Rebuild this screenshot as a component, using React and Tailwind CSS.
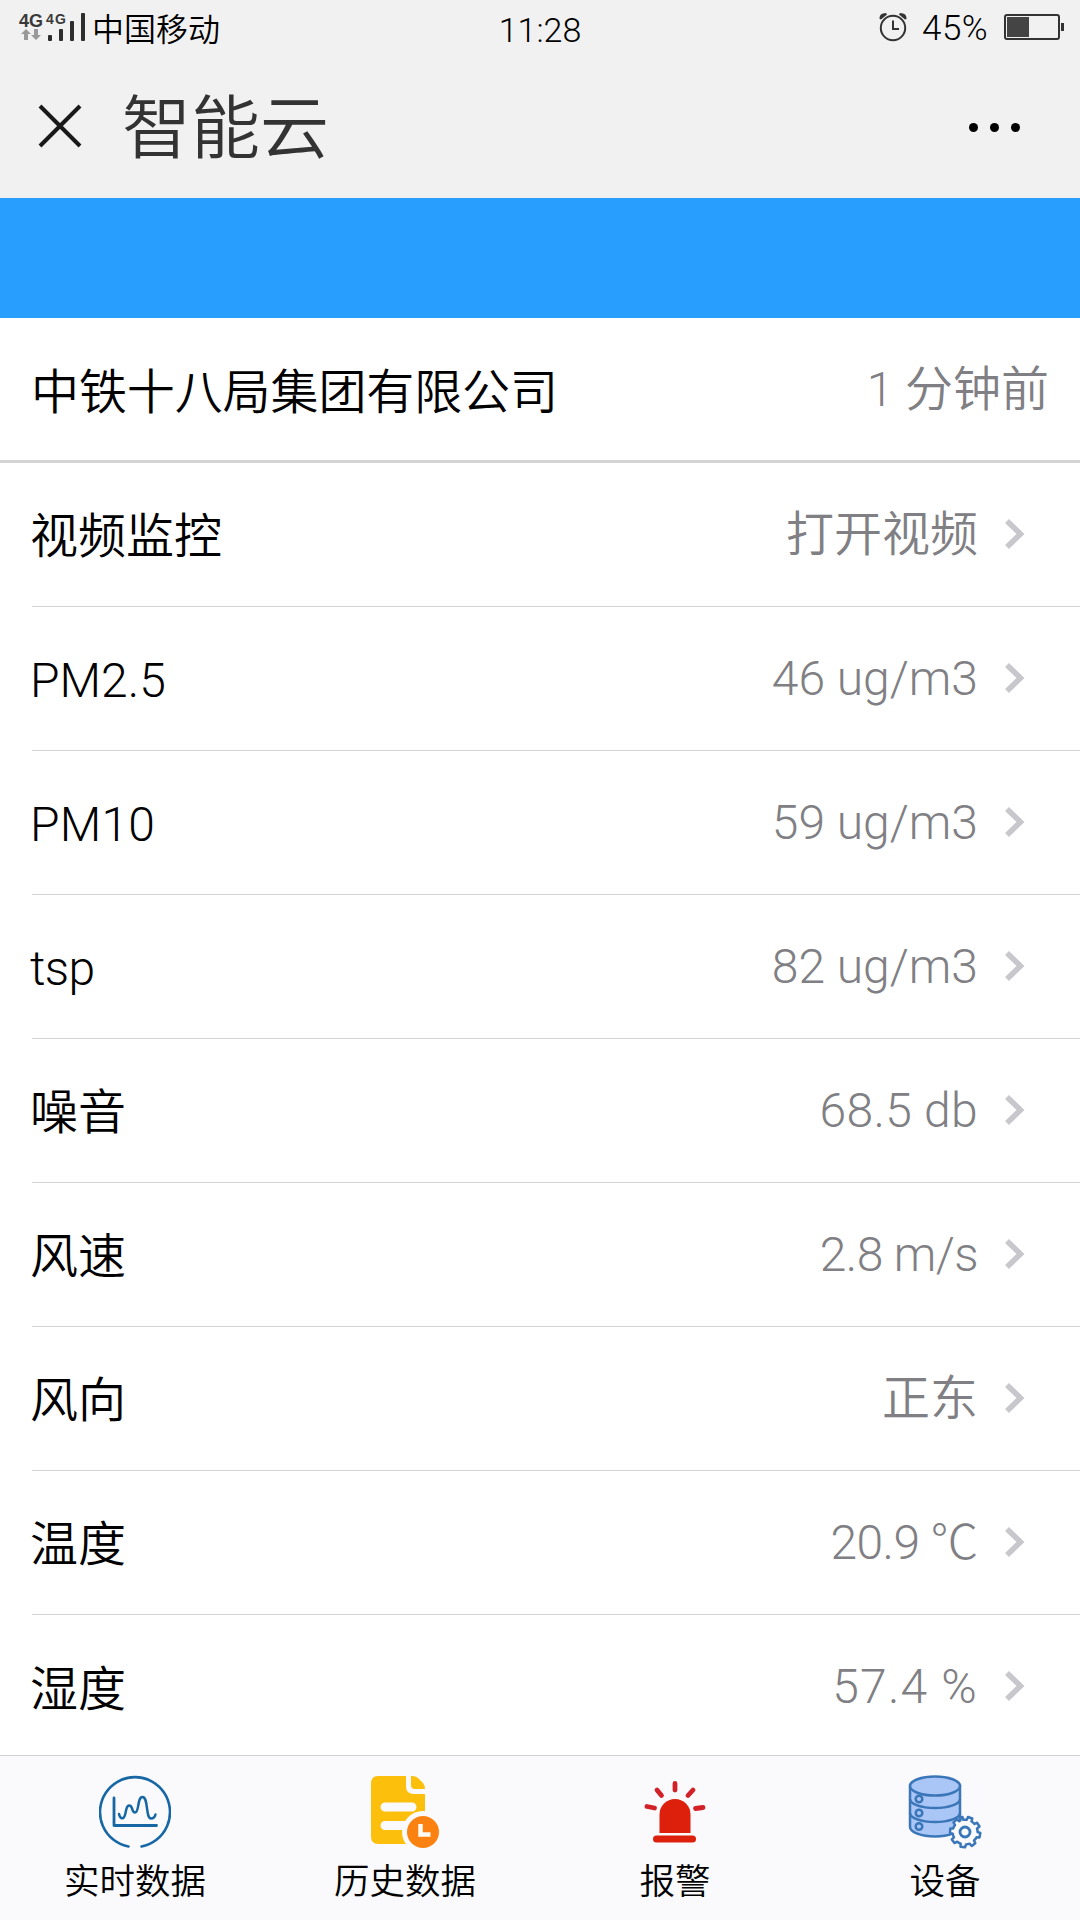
import React from "react";

const readings = [
  { label: "视频监控", value: "打开视频" },
  { label: "PM2.5", value: "46 ug/m3", labelClass: "font-light", valueClass: "font-light" },
  { label: "PM10", value: "59 ug/m3", labelClass: "font-light tracking-[0.2px]", valueClass: "font-light" },
  { label: "tsp", value: "82 ug/m3", labelClass: "font-light tracking-[-0.6px]", valueClass: "font-light" },
  { label: "噪音", value: "68.5 db", valueClass: "font-light tracking-[0.3px]" },
  { label: "风速", value: "2.8 m/s", valueClass: "font-light tracking-[-0.6px]" },
  { label: "风向", value: "正东" },
  { label: "温度", value: "20.9 ℃", valueClass: "font-light tracking-[-0.6px]" },
  { label: "湿度", value: "57.4 %", valueClass: "font-light tracking-[1.2px]" },
];

function RealtimeIcon() {
  return (
    <svg width="72" height="74" viewBox="0 0 72 74" fill="none" stroke="#1767a5" strokeLinecap="round" strokeLinejoin="round">
      <path d="M29.5 71.5A35 35 0 1 1 42.5 71.5" strokeWidth="2.6" />
      <path d="M15 23V50.5H57.5" strokeWidth="2.8" />
      <path d="M20 39C21 44 24.5 45 26 40C27.5 35 27 31 30 30.5C34 30 32.5 37.5 36 37.5C40.5 37.5 38 22 43.5 22C49.5 22 46.5 43.5 52 43.5C54.5 43.5 56 41.5 56.5 39.5" strokeWidth="2.5" />
    </svg>
  );
}

function HistoryIcon() {
  return (
    <svg width="72" height="74" viewBox="0 0 72 74" className="ml-0.5">
      <path d="M8 1H36V11Q36 19 44 19H55V69H8Q1 69 1 61V9Q1 1 8 1Z" fill="#fcbf0c" />
      <path d="M41 1H43Q46 1 48.5 3.5L53 8Q55 10.5 55 14H45Q41 14 41 10Z" fill="#fcbf0c" />
      <path d="M15 32H42M15 50.5H36" stroke="#fafafd" strokeWidth="9" strokeLinecap="round" />
      <circle cx="53" cy="57" r="21" fill="#fafafd" />
      <circle cx="53" cy="57" r="16" fill="#fb8210" />
      <path d="M50.5 49V59.5H60.5" fill="none" stroke="#fffaf2" strokeWidth="4.5" />
    </svg>
  );
}

function AlarmIcon() {
  return (
    <svg width="62" height="74" viewBox="0 0 62 74">
      <path d="M15.5 58V39.5A15.5 15.5 0 0 1 46.5 39.5V58Z" fill="#dc200b" />
      <rect x="9" y="60.5" width="43" height="7" rx="3.5" fill="#dc200b" />
      <path d="M31 8.5V15M13 15L17.5 20.5M49 15L44 20.5M3 31.5L10.5 33M59 32.5L51.5 33.5" stroke="#d32128" strokeWidth="4.8" strokeLinecap="round" />
    </svg>
  );
}

function DeviceIcon() {
  return (
    <svg width="74" height="74" viewBox="0 0 74 74" fill="#a9c6f6" stroke="#3b76b8" strokeWidth="2.5" strokeLinejoin="round">
      <path d="M2 11V52C2 57 13 61.5 27 61.5C41 61.5 52 57 52 52V11Z" />
      <ellipse cx="27" cy="11" rx="25" ry="9.5" />
      <path d="M2 24C2 29 13 33 27 33C41 33 52 29 52 24M2 38C2 43 13 47 27 47C41 47 52 43 52 38" fill="none" />
      <circle cx="11" cy="24" r="3.3" />
      <circle cx="11" cy="38" r="3.3" />
      <circle cx="11" cy="51.5" r="3.3" />
      <g transform="translate(57 57)">
        <path
          d="M-2.5 -15L-1.8 -12.2Q0 -12.5 1.8 -12.2L3 -15L7.3 -13.5L6.5 -10.5Q8.3 -9.5 9.5 -8L12 -9.3L14.5 -5.5L12 -3.5Q12.6 -2 12.6 0L15.3 1L14.5 5.5L11.5 5.3Q10.5 7.2 9 8.5L10.3 11.3L6.7 14L4.5 11.7Q2.8 12.4 1 12.5L0 15.3L-4.5 14.7L-4.3 11.7Q-6.2 11 -7.7 9.7L-10.5 11L-13.2 7.5L-11 5.4Q-12 3.7 -12.3 1.8L-15 1L-14.7 -3.5L-11.8 -3.6Q-11.2 -5.5 -10 -7L-11.5 -9.7L-8.2 -12.7L-5.8 -10.8L-4.5 -11.5L-5 -14.3Z"
          fill="#fafafd"
        />
        <circle r="5" fill="#fafafd" strokeWidth="2.8" />
      </g>
    </svg>
  );
}

const tabs = [
  { label: "实时数据", icon: RealtimeIcon },
  { label: "历史数据", icon: HistoryIcon },
  { label: "报警", icon: AlarmIcon },
  { label: "设备", icon: DeviceIcon },
];

function StatusBar() {
  return (
    <div className="grid h-[56px] grid-cols-3 items-center text-[32px] leading-none text-black">
      <div className="flex items-center pl-[18px]">
        <svg width="68" height="36" viewBox="0 -3 68 36" className="mr-[6px]">
          <g fill="#3a3a3a" fontFamily="Liberation Sans" fontWeight="bold">
            <text x="1" y="14" fontSize="18" textLength="24">4G</text>
            <text x="28" y="11" fontSize="14" textLength="20">4G</text>
          </g>
          <path d="M8 16L3 21H6V27H10V21H13ZM18 27L13 22H16V16H20V22H23Z" fill="#999" />
          <g fill="#2d2d2d">
            <rect x="30" y="22" width="4" height="6" rx="1" />
            <rect x="41" y="16" width="4" height="12" rx="1" />
            <rect x="52" y="8" width="4" height="20" rx="1" />
            <rect x="63" y="0" width="4" height="28" rx="1" />
          </g>
        </svg>
        <span className="pt-[3px]">中国移动</span>
      </div>
      <div className="pt-[3px] text-center text-[34px] font-light">11:28</div>
      <div className="flex items-center justify-end pr-[16px]">
        <svg width="28" height="30" viewBox="0 0 28 30" className="mb-0.5" fill="none" stroke="#333">
          <circle cx="14" cy="16" r="12.2" strokeWidth="2" />
          <path d="M14 8.5V17H20" strokeWidth="2" />
          <path d="M0.5 7Q0 1 7 1L8 2.5L2 7.5ZM27.5 7Q28 1 21 1L20 2.5L26 7.5Z" fill="#333" stroke="none" />
        </svg>
        <span className="ml-[15px] text-[35px] font-light tracking-[0.4px]">45%</span>
        <svg width="60" height="26" viewBox="0 0 60 26" className="mb-0.5 ml-[16px]">
          <rect x="1" y="1" width="54" height="24" rx="2" fill="none" stroke="#333" strokeWidth="2" />
          <rect x="3" y="3" width="22" height="20" fill="#444" />
          <rect x="57" y="9" width="3" height="8" fill="#333" />
        </svg>
      </div>
    </div>
  );
}

function Row({ label, value, labelClass = "", valueClass = "", last }) {
  return (
    <div className={`ml-8 flex h-[144px] shrink-0 items-center justify-between pr-[55px] ${last ? "" : "border-b border-[#d4d4d6]"}`}>
      <span className={`-ml-0.5 pt-[5px] text-black ${labelClass}`}>{label}</span>
      <div className="flex items-center text-[#808084]">
        <span className={valueClass}>{value}</span>
        <svg width="20" height="30" viewBox="0 0 20 30" className="mb-0.5 ml-[27px]" fill="none" stroke="#c7c7cc" strokeWidth="5.5">
          <path d="M2 2L15.5 15L2 28" />
        </svg>
      </div>
    </div>
  );
}

export default function App() {
  return (
    <div className="flex h-[1920px] w-[1080px] flex-col overflow-hidden bg-white font-['Roboto','Noto_Sans_CJK_SC',sans-serif] font-[350]">
      <header className="h-[198px] shrink-0 bg-[#f1f1f1]">
        <StatusBar />
        <div className="flex h-[142px] items-center pr-[60px] pl-[38px]">
          <svg width="44" height="44" viewBox="0 0 44 44" className="mb-0.5" stroke="#1a1a1a" strokeWidth="4">
            <path d="M2 2L42 42M42 2L2 42" />
          </svg>
          <h1 className="ml-[40px] pt-[5px] text-[69px] leading-none text-[#333]">智能云</h1>
          <div className="ml-auto flex gap-[12px]">
            <i className="size-[9px] rounded-full bg-black" />
            <i className="size-[9px] rounded-full bg-black" />
            <i className="size-[9px] rounded-full bg-black" />
          </div>
        </div>
      </header>
      <div className="h-[120px] shrink-0 bg-[#289fff]" />

      <main className="flex min-h-0 flex-1 flex-col overflow-hidden text-[48px] leading-none">
        <div className="flex h-[145px] shrink-0 items-center justify-between border-b-[3px] border-[#d3d3d3] pr-[31px] pl-[31px]">
          <span className="pt-[7px] tracking-[-0.1px] text-black">中铁十八局集团有限公司</span>
          <span className="pt-[2px] text-[#808084]">
            <span className="font-light">1</span> 分钟前
          </span>
        </div>
        {readings.map((item, index) => (
          <Row key={item.label} {...item} last={index === readings.length - 1} />
        ))}
      </main>

      <nav className="grid h-[165px] shrink-0 grid-cols-4 border-t border-[#d0d0d2] bg-[#fafafd]">
        {tabs.map(({ label, icon: Icon }) => (
          <div key={label} className="flex flex-col items-center pt-[19px]">
            <Icon />
            <span className="mt-[16px] text-[35.5px] leading-none text-black">{label}</span>
          </div>
        ))}
      </nav>
    </div>
  );
}
